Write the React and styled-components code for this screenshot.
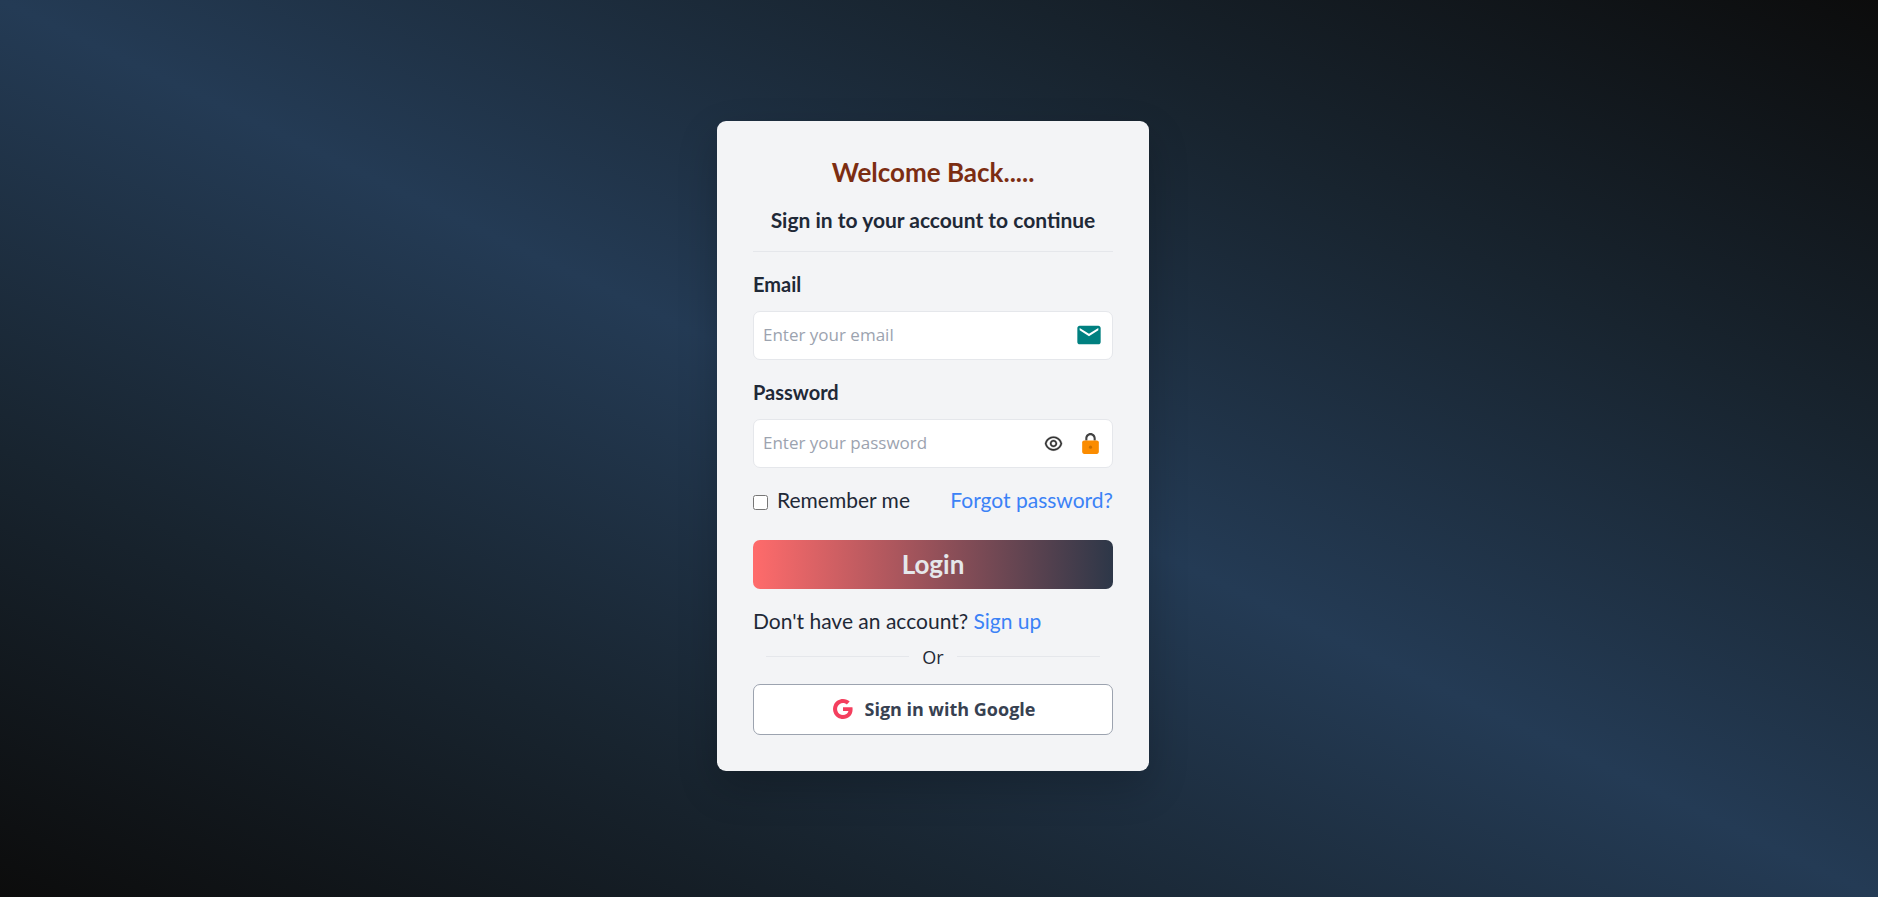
import React from "react";
import styled, { createGlobalStyle } from "styled-components";
import { MdEmail } from "react-icons/md";
import { FcLock } from "react-icons/fc";
import { RiEyeLine, RiGoogleFill } from "react-icons/ri";

const display = `Lato, "Open Sans", sans-serif`;
const body = `"Open Sans", "Noto Sans", sans-serif`;

const GlobalStyle = createGlobalStyle`
  *, *::before, *::after { box-sizing: border-box; }
  body { margin: 0; font-family: ${body}; font-size: 18px; line-height: 28px; color: #1f2937; }
  button, input { font: inherit; color: inherit; }
`;

const Page = styled.main`
  min-height: 100vh;
  display: flex;
  align-items: center;
  justify-content: center;
  padding: 16px 28px 22px 16px;
  background: linear-gradient(to right top, #0c0c0c, #18242f, #243b55, #18242f, #0c0c0c);
`;

const Card = styled.form`
  width: 100%;
  max-width: 432px;
  padding: 36px;
  border-radius: 9px;
  background: #f3f4f6;
  box-shadow: 0 16px 40px rgba(0, 0, 0, 0.2);
`;

const Title = styled.h1`
  margin: 0 0 19px;
  font: 700 26px/30px ${display};
  color: #7c2d12;
  text-align: center;
`;

const Subtitle = styled.h2`
  margin: 0;
  padding-bottom: 17px;
  border-bottom: 1px solid #e5e7eb;
  font: 700 21px/28px ${display};
  text-align: center;
  white-space: nowrap;
`;

const Field = styled.div`
  display: flex;
  flex-direction: column;
  gap: 13px;
  margin-top: 18px;
`;

const Label = styled.label`
  font: 700 20px/28px ${display};
`;

const InputBox = styled.div`
  display: flex;
  align-items: center;
  height: 49px;
  padding: 0 9px;
  border: 1px solid #e5e7eb;
  border-radius: 7px;
  background: #fff;
`;

const Input = styled.input`
  flex: 1;
  min-width: 0;
  padding: 0;
  border: 0;
  outline: 0;
  background: transparent;
  font-size: 17px;
  &::placeholder { color: #9ca3af; opacity: 1; }
`;

const IconButton = styled.button`
  display: flex;
  margin-right: 15px;
  padding: 0;
  border: 0;
  background: none;
  color: #333;
  cursor: pointer;
`;

const Options = styled.div`
  display: flex;
  align-items: center;
  justify-content: space-between;
  margin: 18px 0 26px;
  font: 400 21px/28px ${display};
`;

const Remember = styled.label`
  display: flex;
  align-items: center;
  gap: 9px;
`;

const Checkbox = styled.input`
  width: 15px;
  height: 15px;
  margin: 5px 0 0;
`;

const Link = styled.a`
  color: #3b82f6;
  text-decoration: none;
`;

const LoginButton = styled.button`
  display: block;
  width: 100%;
  height: 49px;
  padding: 0 0 1px;
  border: 0;
  border-radius: 7px;
  background: linear-gradient(to right, #ff6b6b, #2d3748);
  color: #e5e7eb;
  font: 700 26px/30px ${display};
  cursor: pointer;
`;

const SignUp = styled.p`
  margin: 18px 0 8px;
  font: 400 21px/28px ${display};
`;

const Divider = styled.div`
  display: flex;
  align-items: center;
  gap: 13px;
  padding: 0 13px;
  margin-bottom: 13px;
  &::before, &::after {
    content: "";
    flex: 1;
    height: 1px;
    background: #e5e7eb;
  }
`;

const GoogleButton = styled.button`
  display: flex;
  align-items: center;
  justify-content: center;
  gap: 10px;
  width: 100%;
  height: 51px;
  border: 1px solid #9ca3af;
  border-radius: 7px;
  background: #fff;
  color: #374151;
  font-weight: 700;
  cursor: pointer;
`;

export default function App() {
  return (
    <>
      <GlobalStyle />
      <Page>
        <Card onSubmit={(e) => e.preventDefault()}>
          <Title>Welcome Back.....</Title>
          <Subtitle>Sign in to your account to continue</Subtitle>
          <Field>
            <Label htmlFor="email">Email</Label>
            <InputBox>
              <Input id="email" type="email" placeholder="Enter your email" />
              <MdEmail size={28} color="#008080" />
            </InputBox>
          </Field>
          <Field>
            <Label htmlFor="password">Password</Label>
            <InputBox>
              <Input id="password" type="password" placeholder="Enter your password" />
              <IconButton type="button" aria-label="Show password">
                <RiEyeLine size={19} stroke="currentColor" strokeWidth={0.4} />
              </IconButton>
              <FcLock size={25} />
            </InputBox>
          </Field>
          <Options>
            <Remember>
              <Checkbox type="checkbox" />
              Remember me
            </Remember>
            <Link href="#forgot">Forgot password?</Link>
          </Options>
          <LoginButton type="submit">Login</LoginButton>
          <SignUp>
            Don't have an account? <Link href="#signup">Sign up</Link>
          </SignUp>
          <Divider>Or</Divider>
          <GoogleButton type="button">
            <RiGoogleFill size={24} color="#f43f5e" />
            Sign in with Google
          </GoogleButton>
        </Card>
      </Page>
    </>
  );
}
